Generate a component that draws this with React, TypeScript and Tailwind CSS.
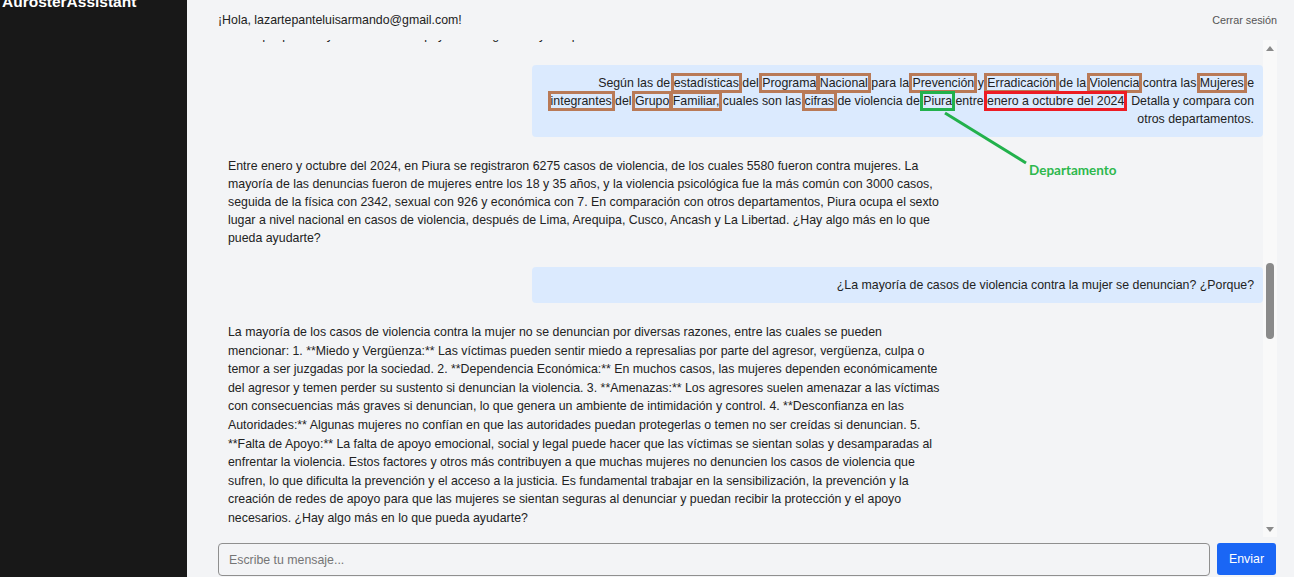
import React, { useLayoutEffect, useRef } from "react";

const box = "outline-solid outline-[3px] outline-[#b97a57]";

const UserBubble = ({ children }: { children: React.ReactNode }) => (
  <div className="ml-auto w-[70%] rounded-[4px] bg-[#dbeafe] px-[9px] py-[9px] text-right">
    {children}
  </div>
);

const BotBubble = ({ children, className = "" }: { children: React.ReactNode; className?: string }) => (
  <div className={`w-[70%] py-[9px] pr-[7px] pl-[10px] ${className}`}>{children}</div>
);

const Triangle = ({ down }: { down?: boolean }) => (
  <svg width="8" height="5" viewBox="0 0 8 5">
    <path d={down ? "M0 0h8L4 5z" : "M0 5h8L4 0z"} fill="#8a8a8a" />
  </svg>
);

export default function App() {
  const scrollRef = useRef<HTMLDivElement>(null);
  const anchorRef = useRef<HTMLDivElement>(null);

  // start the chat scrolled to the annotated question
  useLayoutEffect(() => {
    if (scrollRef.current && anchorRef.current) {
      scrollRef.current.scrollTop = anchorRef.current.offsetTop - 25;
    }
  }, []);

  return (
    <div className="flex h-[577px] w-full overflow-hidden font-['Liberation_Sans',Arial,sans-serif] text-[12.35px] leading-[18px] text-[#222]">
      <aside className="w-[187px] shrink-0 bg-[#181818] pl-[2px]">
        <h1 className="-mt-[6px] text-[15.5px] leading-none font-bold text-white">
          AurosterAssistant
        </h1>
      </aside>

      <main className="flex min-w-0 flex-1 flex-col bg-[#f3f4f6] pr-[17px] pb-[1px] pl-[31px]">
        <header className="flex h-[40px] shrink-0 items-center justify-between">
          <span>¡Hola, lazartepanteluisarmando@gmail.com!</span>
          <button className="text-[10.8px] text-[#555]">Cerrar sesión</button>
        </header>

        <div className="flex min-h-0 flex-1">
          <div
            ref={scrollRef}
            className="relative flex min-w-0 flex-1 flex-col gap-[11px] overflow-y-auto pb-[14px] [scrollbar-width:none]"
          >
            <UserBubble>
              ¿Cuántos casos de violencia contra la mujer se registraron en Piura el último año?
            </UserBubble>
            <BotBubble className="mb-[1px]">
              Según los registros disponibles, en Piura se atendieron miles de casos de violencia
              contra la mujer, principalmente de tipo psicológico y físico. Las autoridades
              recomiendan fortalecer la atención y prevención en las zonas más afectadas. ¿Hay algo
              más en lo que pueda ayudarte? Puedo apoyarte con gráficos y comparaciones.
            </BotBubble>

            <div ref={anchorRef} className="relative">
              <UserBubble>
                Según las de <span className={box}>estadísticas</span> del{" "}
                <span className={box}>Programa</span> <span className={box}>Nacional</span> para la{" "}
                <span className={box}>Prevención</span> y <span className={box}>Erradicación</span>{" "}
                de la <span className={box}>Violencia</span> contra las{" "}
                <span className={box}>Mujeres</span> e <span className={box}>integrantes</span> del{" "}
                <span className={box}>Grupo</span> <span className={box}>Familiar,</span> cuales son
                las <span className={box}>cifras</span> de violencia de{" "}
                <span className="outline-solid outline-[3px] outline-[#22b14c]">Piura</span> entre{" "}
                <span className="outline-solid outline-[3px] outline-[#ed1c24]">
                  enero a octubre del 2024
                </span>
                . Detalla y compara con otros departamentos.
              </UserBubble>
              <svg
                className="pointer-events-none absolute top-[46px] left-[725px] overflow-visible"
                width="86"
                height="56"
              >
                <line x1="2" y1="2" x2="83" y2="52" stroke="#22b14c" strokeWidth="3" />
              </svg>
              <span className="pointer-events-none absolute top-[96px] left-[811px] font-['Lato',sans-serif] text-[13.5px] font-bold text-[#2db84d]">
                Departamento
              </span>
            </div>

            <BotBubble>
              Entre enero y octubre del 2024, en Piura se registraron 6275 casos de violencia, de
              los cuales 5580 fueron contra mujeres. La mayoría de las denuncias fueron de mujeres
              entre los 18 y 35 años, y la violencia psicológica fue la más común con 3000 casos,
              seguida de la física con 2342, sexual con 926 y económica con 7. En comparación con
              otros departamentos, Piura ocupa el sexto lugar a nivel nacional en casos de
              violencia, después de Lima, Arequipa, Cusco, Ancash y La Libertad. ¿Hay algo más en lo
              que pueda ayudarte?
            </BotBubble>

            <UserBubble>
              ¿La mayoría de casos de violencia contra la mujer se denuncian? ¿Porque?
            </UserBubble>

            <BotBubble className="leading-[18.6px]">
              La mayoría de los casos de violencia contra la mujer no se denuncian por diversas
              razones, entre las cuales se pueden mencionar: 1. **Miedo y Vergüenza:** Las víctimas
              pueden sentir miedo a represalias por parte del agresor, vergüenza, culpa o temor a
              ser juzgadas por la sociedad. 2. **Dependencia Económica:** En muchos casos, las
              mujeres dependen económicamente del agresor y temen perder su sustento si denuncian la
              violencia. 3. **Amenazas:** Los agresores suelen amenazar a las víctimas con
              consecuencias más graves si denuncian, lo que genera un ambiente de intimidación y
              control. 4. **Desconfianza en las Autoridades:** Algunas mujeres no confían en que las
              autoridades puedan protegerlas o temen no ser creídas si denuncian. 5. **Falta de
              Apoyo:** La falta de apoyo emocional, social y legal puede hacer que las víctimas se
              sientan solas y desamparadas al enfrentar la violencia. Estos factores y otros más
              contribuyen a que muchas mujeres no denuncien los casos de violencia que sufren, lo
              que dificulta la prevención y el acceso a la justicia. Es fundamental trabajar en la
              sensibilización, la prevención y la creación de redes de apoyo para que las mujeres se
              sientan seguras al denunciar y puedan recibir la protección y el apoyo necesarios.
              ¿Hay algo más en lo que pueda ayudarte?
            </BotBubble>
          </div>

          <div className="flex w-[14px] shrink-0 flex-col items-center bg-[#f9f9f9]">
            <div className="flex h-[16px] items-center">
              <Triangle />
            </div>
            <div className="flex-1">
              <div className="mt-[207px] h-[76px] w-[8px] rounded-full bg-[#8a8a8a]" />
            </div>
            <div className="flex h-[16px] items-center">
              <Triangle down />
            </div>
          </div>
        </div>

        <form className="mt-[6px] flex h-[33px] shrink-0 gap-[7px]" onSubmit={(e) => e.preventDefault()}>
          <input
            placeholder="Escribe tu mensaje..."
            className="min-w-0 flex-1 rounded-[4px] border border-[#8f8f8f] bg-transparent px-[10px] text-[12.35px] placeholder:text-[#757575] focus:outline-none"
          />
          <button className="mr-[1px] mb-[1px] w-[59px] rounded-[3px] bg-[#1a66f5] text-[12.35px] text-white">
            Enviar
          </button>
        </form>
      </main>
    </div>
  );
}
